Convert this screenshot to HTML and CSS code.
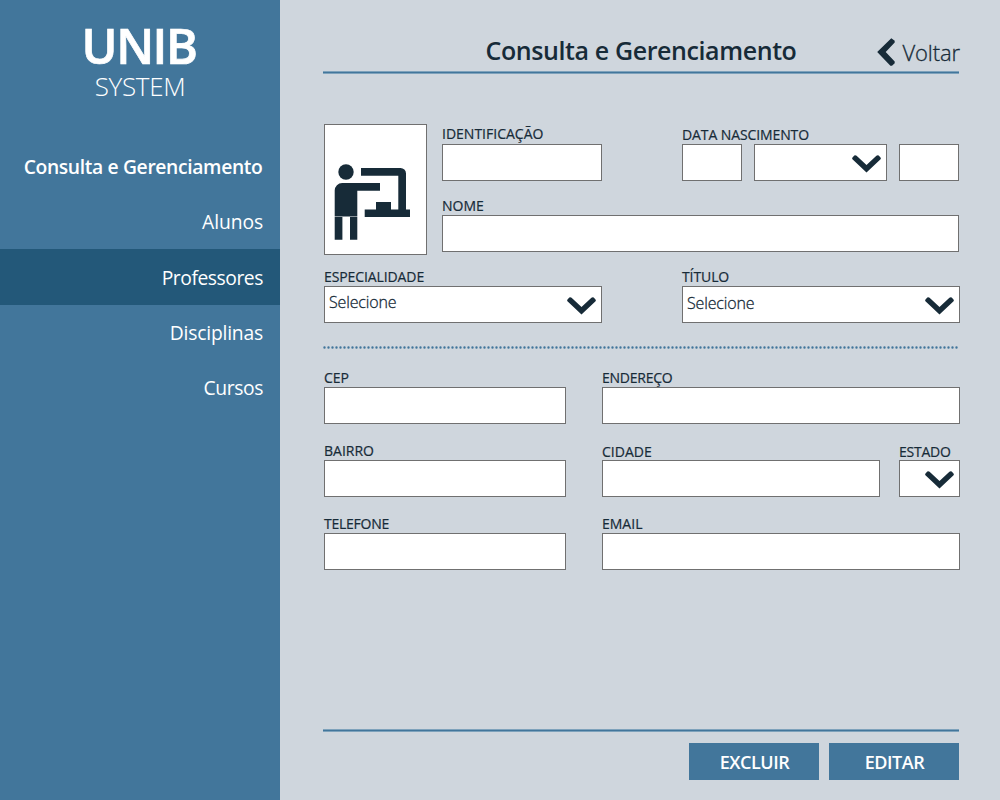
FILE: index.html
```
<!DOCTYPE html>
<html lang="pt">
<head>
<meta charset="utf-8">
<title>UNIB System</title>
<link rel="stylesheet" href="styles.css">
</head>
<body>
<svg width="0" height="0" class="defs">
  <symbol id="chevron" viewBox="0 0 29 18">
    <path d="M2.3 0.5Q3.4-0.3 4.6 0.7L14.5 10.1 24.4 0.7Q25.6-0.3 26.7 0.5L28.5 2.4Q29.3 3.6 28.3 4.6L14.5 17.6 0.7 4.6Q-0.3 3.6 0.5 2.4Z" fill="#172b38"/>
  </symbol>
</svg>
<div class="app">
  <aside class="sidebar">
    <div class="brand">UNIB</div>
    <div class="brand-sub">SYSTEM</div>
    <nav class="menu">
      <a class="item heading">Consulta e Gerenciamento</a>
      <a class="item alun">Alunos</a>
      <a class="item active">Professores</a>
      <a class="item disc">Disciplinas</a>
      <a class="item curs">Cursos</a>
    </nav>
  </aside>
  <main class="main">
    <header class="header">
      <h1 class="title">Consulta e Gerenciamento</h1>
      <a class="back">
        <svg class="back-icon" viewBox="0 0 18 28"><path d="M14.3 0.3 17.7 2.8V4.6L8.7 14 17.7 23.4V25.2L15 27.8H13.4L0.2 14Z" fill="#172b38"/></svg>
        <span class="back-text">Voltar</span>
      </a>
    </header>
    <div class="rule"></div>

    <section class="identity">
      <div class="photo">
        <svg width="101" height="129" viewBox="1 1 101 129" fill="#172b38">
          <circle cx="22" cy="48" r="7.7"/>
          <path d="M10.7 92.6V66.5a7.5 7.5 0 0 1 7.5-7.5H56v7.7H33.3v25.9z"/>
          <path d="M10.7 92.9h22.6v22.8H26V93.1h-7.6v22.6h-7.7z"/>
          <path d="M37 44h39.5a5.5 5.5 0 0 1 5.5 5.5v36h4v7.5H40.7v-7.5H52V78h15v7.5h7.3V51.7H37z"/>
        </svg>
      </div>
      <div class="identity-fields">
        <div class="row">
          <label class="field w160 up"><span class="label">IDENTIFICAÇÃO</span><input class="input"></label>
          <div class="field w277 birth">
            <span class="label">DATA NASCIMENTO</span>
            <div class="date">
              <input class="input w60">
              <div class="input select w133"><svg class="chevron"><use href="#chevron"/></svg></div>
              <input class="input w60">
            </div>
          </div>
        </div>
        <label class="field"><span class="label">NOME</span><input class="input"></label>
      </div>
    </section>

    <div class="row wide">
      <div class="field w278"><span class="label">ESPECIALIDADE</span><div class="input select"><span class="value">Selecione</span><svg class="chevron"><use href="#chevron"/></svg></div></div>
      <div class="field w278"><span class="label">TÍTULO</span><div class="input select"><span class="value lower">Selecione</span><svg class="chevron"><use href="#chevron"/></svg></div></div>
    </div>

    <svg class="dots" width="636" height="3"><line x1="1.5" y1="1.5" x2="635" y2="1.5" stroke="#42769b" stroke-width="2.4" stroke-linecap="round" stroke-dasharray="0 4"/></svg>

    <section class="address">
      <label class="field"><span class="label">CEP</span><input class="input"></label>
      <label class="field tight"><span class="label">ENDEREÇO</span><input class="input"></label>
      <label class="field"><span class="label">BAIRRO</span><input class="input"></label>
      <div class="row">
        <label class="field w278 down"><span class="label">CIDADE</span><input class="input"></label>
        <div class="field w61 down tight"><span class="label">ESTADO</span><div class="input select"><svg class="chevron"><use href="#chevron"/></svg></div></div>
      </div>
      <label class="field tight"><span class="label">TELEFONE</span><input class="input"></label>
      <label class="field"><span class="label">EMAIL</span><input class="input"></label>
    </section>

    <footer class="footer">
      <div class="rule"></div>
      <div class="actions">
        <button class="button">EXCLUIR</button>
        <button class="button">EDITAR</button>
      </div>
    </footer>
  </main>
</div>
</body>
</html>
```
FILE: styles.css
```
* { box-sizing: border-box; }
body {
  margin: 0;
  font-family: "Open Sans", "Noto Sans", sans-serif;
  color: #172b38;
  background: #cfd6dd;
}
.defs { position: absolute; }
.app { display: flex; width: 1000px; height: 800px; overflow: hidden; }

.sidebar { width: 280px; padding-top: 19px; background: #42769b; color: #fff; }
.brand { padding-right: 2px; font-size: 48.5px; line-height: 52px; font-weight: 600; letter-spacing: -1.5px; text-align: center; -webkit-text-stroke: 0.7px #fff; }
.brand-sub { font-size: 26px; line-height: 30px; font-weight: 300; letter-spacing: -0.3px; text-align: center; }
.menu { display: flex; flex-direction: column; margin-top: 38px; }
.item { height: 55px; line-height: 55px; padding-right: 17px; font-size: 19.3px; text-align: right; }
.heading { padding-right: 17.5px; font-weight: 600; letter-spacing: -0.35px; }
.alun { letter-spacing: -0.1px; }
.active { height: 56px; line-height: 57px; background: #235879; letter-spacing: -0.45px; }
.disc { letter-spacing: -0.2px; }
.curs { letter-spacing: -0.4px; }

.main { display: flex; flex-direction: column; width: 720px; padding: 0 40px 20px 44px; }
.header {
  display: grid;
  grid-template-columns: 1fr auto 1fr;
  height: 71px;
  padding-top: 30px;
}
.title { grid-column: 2; margin: 0 1px 0 -1px; font-size: 25px; line-height: 40px; font-weight: 600; letter-spacing: -0.4px; }
.back { display: flex; justify-content: flex-end; gap: 7px; }
.back-icon { width: 18px; height: 28px; margin-top: 8px; }
.back-text { font-size: 22px; line-height: 45px; font-weight: 300; letter-spacing: -0.1px; -webkit-text-stroke: 0.3px #172b38; }
.rule {
  flex: none;
  height: 3px;
  margin: 0 1px 0 -1px;
  background: linear-gradient(#7ea2bb 0 1px, #42769b 1px 2px, #7ea2bb 2px);
}

.identity { display: flex; gap: 15px; margin-top: 50px; padding-right: 1px; }
.photo { width: 103px; height: 131px; border: 1px solid #707070; background: #fff; }
.photo svg { display: block; }
.identity-fields { flex: 1; display: flex; flex-direction: column; gap: 14px; height: 131px; }
.row { display: flex; justify-content: space-between; }
.wide { margin-top: 11px; }
.date { display: flex; justify-content: space-between; }

.field { display: flex; flex-direction: column; }
.label { height: 20px; font-size: 14px; line-height: 21px; white-space: nowrap; -webkit-text-stroke: 0.2px #172b38; }
.up .label { line-height: 19px; }
.down .label { line-height: 23px; }
.wide .label, .birth .label { letter-spacing: -0.1px; }
.tight .label { letter-spacing: -0.25px; }
.input {
  width: 100%;
  height: 37px;
  padding: 0 4px;
  border: 1px solid #707070;
  border-radius: 0;
  background: #fff;
  font: inherit;
}
.select { display: flex; justify-content: space-between; padding: 0 5px 0 4px; }
.value { font-size: 16px; line-height: 31px; font-weight: 300; letter-spacing: -0.15px; -webkit-text-stroke: 0.3px #172b38; }
.lower { line-height: 33px; }
.chevron { flex: none; width: 29px; height: 18px; margin: 9.6px 0 0 auto; }
.w60 { width: 60px; }
.w61 { width: 61px; }
.w133 { width: 133px; }
.w160 { width: 160px; }
.w277 { width: 277px; }
.w278 { width: 278px; }

.dots { flex: none; display: block; margin: 23px 0 18px -1px; }
.address { display: grid; grid-template-columns: 242px 358px; gap: 16px 36px; }

.footer { margin-top: auto; }
.actions { display: flex; justify-content: flex-end; gap: 10px; margin-top: 11px; padding-right: 1px; }
.button {
  width: 130px;
  height: 37px;
  padding: 1px 0 0 1px;
  border: 0;
  background: #42769b;
  color: #fff;
  font: 600 18px/36px "Open Sans", sans-serif;
  letter-spacing: -0.45px;
}
```
